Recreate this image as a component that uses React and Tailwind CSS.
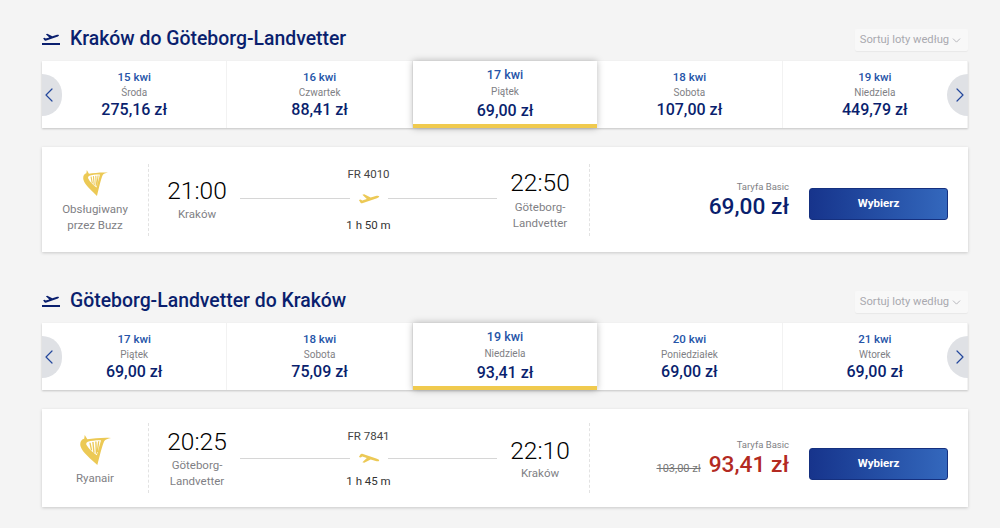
import { ChevronLeft, ChevronRight, ChevronDown } from 'lucide-react';

const FONT = 'font-["Roboto","Liberation_Sans",sans-serif]';

function PlaneIcon({ className, fill }) {
  return (
    <svg viewBox="0 0 24 14" className={className} fill={fill}>
      <path d="M1 8.6 3 8l1.6 1.2 5-1.6L4.8 3l2-.6 7 3.6 5.6-1.8c1.6-.5 3.4-.4 3.7.3.3.8-1 1.6-2.4 2.1L4.6 12.2c-.8.2-1.4 0-1.8-.6z" />
    </svg>
  );
}

function Harp({ className }) {
  return (
    <svg viewBox="1.5 1.5 29.5 31" preserveAspectRatio="none" className={className} fill="none">
      <path d="M6 1.5 8.5 6c6-1 14-2 22.500-1.500-3 .6-5.500 1.500-6.500 3.500-2 5-4 14-6.500 24.500C12 26 4 20 2 13 1 9 3 6 5.500 5.500z" fill="#ecc955" />
      <path d="M9 8.500c3-1 8-1.600 12.500-1.500l-4 15.500C13 19 8.500 14 7.500 11c-.3-1 .4-2 1.500-2.500z" fill="#fff" />
      <path d="M11 9.500l1.500 8M13.800 8.800l1 11M16.600 8.300l.5 12.500M19.300 8l-1.300 11" stroke="#ecc955" strokeWidth="1.300" />
    </svg>
  );
}

function DateCell({ date, day, price, active }) {
  if (active) {
    return (
      <div className="relative z-10 flex-1 flex flex-col items-center bg-white border-b-4 border-[#f0ca4e] shadow-[0_0_7px_rgba(0,0,0,0.28)] pt-[5px]">
        <div className="text-[12.500px] leading-[18px] font-medium text-[#2554a8]">{date}</div>
        <div className="text-[10px] leading-[14px] mt-[1px] text-[#7f7f85]">{day}</div>
        <div className="text-[16px] leading-[20px] mt-[2px] font-medium text-[#0a1f6e]">{price}</div>
      </div>
    );
  }
  return (
    <div className="flex-1 flex flex-col items-center border-r border-[#f2f2f2] pt-[8px]">
      <div className="text-[11.500px] leading-[17px] font-medium text-[#2554a8]">{date}</div>
      <div className="text-[10px] leading-[14px] text-[#7f7f85]">{day}</div>
      <div className="text-[16px] leading-[20px] font-medium text-[#0a1f6e]">{price}</div>
    </div>
  );
}

function DateStrip({ days }) {
  return (
    <div className="relative flex h-[67px] bg-white shadow-[0_1px_2px_rgba(0,0,0,0.2)]">
      {days.map(d => <DateCell key={d.date} {...d} />)}
      <div className="absolute left-0 top-[13px] z-20 w-[20px] h-[42px] rounded-r-full bg-[#dfe1e5] flex items-center text-[#23479c]">
        <ChevronLeft className="w-[24px] h-[24px] shrink-0 -ml-[5px]" strokeWidth={1.200} />
      </div>
      <div className="absolute right-0 top-[13px] z-20 w-[21px] h-[42px] rounded-l-full bg-[#dfe1e5] flex items-center justify-end text-[#23479c]">
        <ChevronRight className="w-[24px] h-[24px] shrink-0 -mr-[4px]" strokeWidth={1.200} />
      </div>
    </div>
  );
}

function Place({ lines }) {
  return (
    <div className="text-[11.500px] leading-[16px] mt-[1px] text-[#7f7f85] text-center">
      {lines.map(l => <div key={l}>{l}</div>)}
    </div>
  );
}

function FlightCard({ f }) {
  return (
    <div className={`flex items-center bg-white shadow-[0_1px_3px_rgba(0,0,0,0.18)] ${f.cardClass}`}>
      {/* carrier */}
      <div className={`w-[107px] flex flex-col items-center border-r border-dashed border-[#e2e2e2] ${f.colClass}`}>
        <Harp className={f.harpClass} />
        <div className={`text-[11.500px] leading-[16px] text-[#7f7f85] text-center ${f.carrierClass}`}>
          {f.carrier.map(l => <div key={l}>{l}</div>)}
        </div>
      </div>

      {/* times */}
      <div className={`w-[441px] flex border-r border-dashed border-[#e2e2e2] ${f.colClass}`}>
        <div className="w-[91px] shrink-0 pl-[5px] flex flex-col items-center">
          <div className={`text-[24.500px] leading-[28px] font-light text-black ${f.timeClass}`}>{f.dep}</div>
          <Place lines={f.from} />
        </div>
        <div className="w-[257px] shrink-0 flex flex-col items-center">
          <div className={`text-[11.500px] leading-[14px] text-[#444] ${f.noClass}`}>{f.no}</div>
          <div className={`w-full flex items-center h-[14px] ${f.lineClass}`}>
            <div className="flex-1 h-[1px] bg-[#d6d6d6]" />
            <PlaneIcon className={`w-[22px] h-[13px] mx-[8px] ${f.planeClass}`} fill="#ecc955" />
            <div className="flex-1 h-[1px] bg-[#d6d6d6]" />
          </div>
          <div className={`text-[11.500px] leading-[14px] text-[#333] ${f.durClass}`}>{f.dur}</div>
        </div>
        <div className="w-[86px] shrink-0 flex flex-col items-center">
          <div className={`text-[24.500px] leading-[28px] font-light text-black ${f.arrClass}`}>{f.arr}</div>
          <Place lines={f.to} />
        </div>
      </div>

      {/* price */}
      <div className="flex-1 flex items-center justify-end pr-[20px]">
        <div className="flex flex-col items-end">
          <div className="text-[9.500px] leading-[14px] text-[#7f7f85]">Taryfa Basic</div>
          <div className="flex items-baseline mt-[1px]">
            {f.old && <span className="text-[11px] text-[#777] line-through mr-[8px]">{f.old}</span>}
            <span className={`text-[22.700px] leading-[24px] font-medium ${f.old ? 'text-[#b32a22]' : 'text-[#0a1f6e]'}`}>{f.price}</span>
          </div>
        </div>
        <button className={`ml-[20px] w-[139px] h-[32px] rounded-[3px] border border-[#15307f] bg-gradient-to-r from-[#17348c] to-[#3468bd] text-white text-[11.500px] font-bold ${f.btnClass}`}>
          Wybierz
        </button>
      </div>
    </div>
  );
}

function Section({ title, days, flight, className }) {
  return (
    <section className={className}>
      <div className="flex items-center justify-between h-[32px] pt-[2px] mb-[7px]">
        <div className="flex items-center">
          <div className="w-[18px] flex flex-col mr-[10px]">
            <PlaneIcon className="w-[18px] h-[10px]" fill="#0a1f6e" />
            <div className="h-[2px] bg-[#0a1f6e] mt-[1px]" />
          </div>
          <h2 className="text-[19.400px] font-medium text-[#0a1f6e]">{title}</h2>
        </div>
        <div className="flex items-center h-[22px] w-[113px] justify-center rounded-[2px] bg-[#f8f8f8] shadow-[0_1px_1px_rgba(0,0,0,0.05)] text-[11.200px] text-[#a9a9af] mt-[2px]">
          Sortuj loty według
          <ChevronDown className="w-[13px] h-[13px] ml-[1px]" strokeWidth={1.500} />
        </div>
      </div>
      <DateStrip days={days} />
      <div className="mt-[19px]">
        <FlightCard f={flight} />
      </div>
    </section>
  );
}

const OUT_DAYS = [
  { date: '15 kwi', day: 'Środa', price: '275,16 zł' },
  { date: '16 kwi', day: 'Czwartek', price: '88,41 zł' },
  { date: '17 kwi', day: 'Piątek', price: '69,00 zł', active: true },
  { date: '18 kwi', day: 'Sobota', price: '107,00 zł' },
  { date: '19 kwi', day: 'Niedziela', price: '449,79 zł' },
];

const BACK_DAYS = [
  { date: '17 kwi', day: 'Piątek', price: '69,00 zł' },
  { date: '18 kwi', day: 'Sobota', price: '75,09 zł' },
  { date: '19 kwi', day: 'Niedziela', price: '93,41 zł', active: true },
  { date: '20 kwi', day: 'Poniedziałek', price: '69,00 zł' },
  { date: '21 kwi', day: 'Wtorek', price: '69,00 zł' },
];

const OUT_FLIGHT = {
  cardClass: 'h-[105px]', colClass: 'h-[72px]',
  harpClass: 'w-[25px] h-[26px] mt-[6px]', carrierClass: 'mt-[5px]',
  carrier: ['Obsługiwany', 'przez Buzz'],
  dep: '21:00', from: ['Kraków'], timeClass: 'mt-[13px]',
  no: 'FR 4010', noClass: 'mt-[3px]', lineClass: 'mt-[11px]', durClass: 'mt-[12px]', planeClass: '', dur: '1 h 50 m',
  arr: '22:50', to: ['Göteborg-', 'Landvetter'], arrClass: 'mt-[5px] mb-[1px]',
  price: '69,00 zł', btnClass: 'mt-[8px]',
};

const BACK_FLIGHT = {
  cardClass: 'h-[98px]', colClass: 'h-[70px]',
  harpClass: 'w-[31px] h-[30px] mt-[12px]', carrierClass: 'mt-[5px]',
  carrier: ['Ryanair'],
  dep: '20:25', from: ['Göteborg-', 'Landvetter'], timeClass: 'mt-[5px]',
  no: 'FR 7841', noClass: 'mt-[6px]', lineClass: 'mt-[8px]', durClass: 'mt-[9px]', planeClass: '-scale-y-100', dur: '1 h 45 m',
  arr: '22:10', to: ['Kraków'], arrClass: 'mt-[14px] -mb-[1px]',
  old: '103,00 zł', price: '93,41 zł', btnClass: 'mt-[11px]',
};

export default function App() {
  return (
    <div className={`${FONT} w-[1000px] h-[528px] overflow-hidden bg-[#f4f4f4] pl-[42px] pr-[32px] pt-[22px]`}>
      <Section title="Kraków do Göteborg-Landvetter" days={OUT_DAYS} flight={OUT_FLIGHT} />
      <Section title="Göteborg-Landvetter do Kraków" days={BACK_DAYS} flight={BACK_FLIGHT} className="mt-[32px]" />
    </div>
  );
}
